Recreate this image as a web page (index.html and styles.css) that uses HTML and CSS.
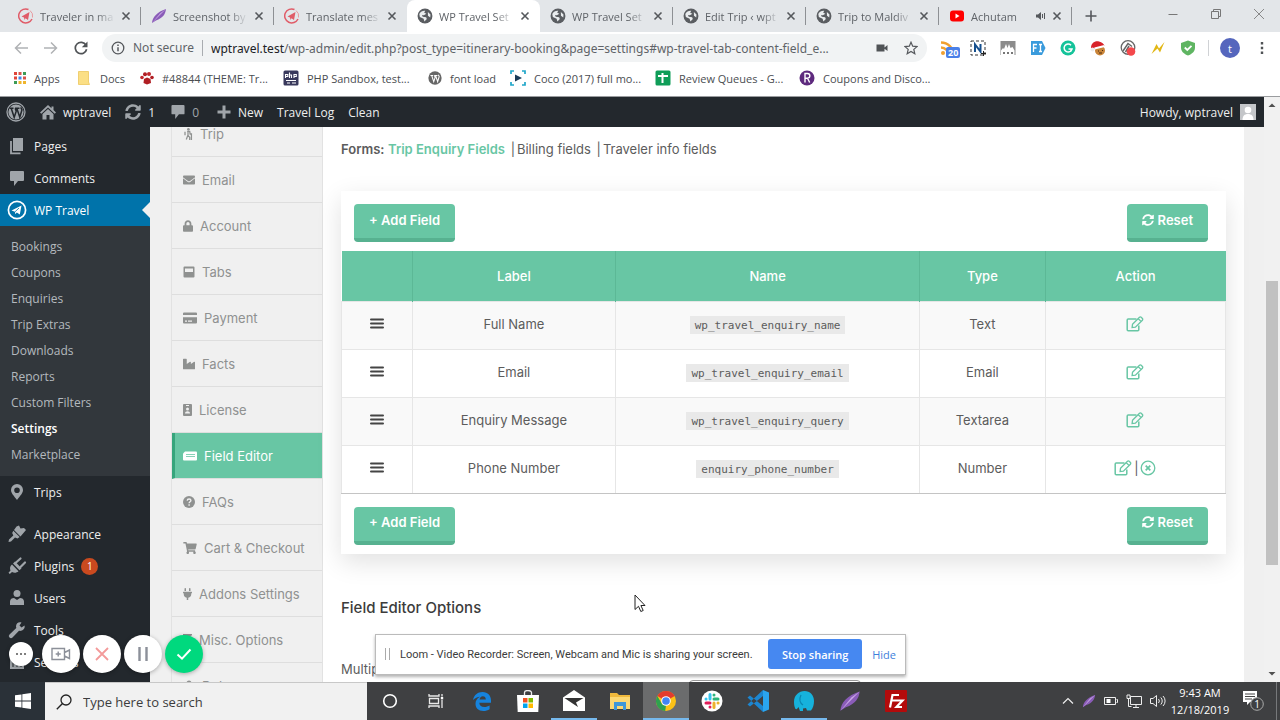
FILE: index.html
```html
<!DOCTYPE html>
<html lang="en">
<head>
  <meta charset="UTF-8" />
  <title>WP Travel Settings</title>
  <meta name="viewport" content="width=device-width, initial-scale=1" />
  <link rel="stylesheet" href="styles.css">
</head>
<body>

  <!-- Shared icons -->
  <svg class="sprite" aria-hidden="true">
    <symbol id="i-globe" viewBox="0 0 14 14"><circle cx="7" cy="7" r="6.5" fill="#5a5d61"/><path d="M2 5.2C3.200 3 5 2.200 7.200 2.400L6.300 4.200 8.200 5 6 6.300 4.400 6.100 5 7.600 8 8l.6 1.600L6.500 11.800 5.800 9.500 2.500 7.800zM9.500 3.500l2.300 2.200-.2 2.600-2-1.600z" fill="#e9ecee"/></symbol>
    <symbol id="i-plane" viewBox="0 0 16 16"><path d="M10.500 1.500A7 7 0 1 0 14 11" fill="none" stroke="#e05c68" stroke-width="1.500"/><path d="M12 2.500a7 7 0 0 1 2.500 7" fill="none" stroke="#e89aa0" stroke-width="1"/><path d="M3.500 8.500 11.500 4 10 12 7.500 10.200 6.500 12 6 9.500z" fill="#e05c68"/></symbol>
    <symbol id="i-feather" viewBox="0 0 16 16"><path d="M1 15C1.500 9 6 4 15 1 14.500 6 12 10 5 12.500z" fill="#8a5cb8"/><path d="M1 15 15 1 9 5.500z" fill="#c9a8e6"/></symbol>
    <symbol id="i-close" viewBox="0 0 10 10"><path d="M1.500 1.500l7 7M8.500 1.500l-7 7" stroke="#55585c" stroke-width="1.600"/></symbol>
    <symbol id="i-wp" viewBox="0 0 20 20"><circle cx="10" cy="10" r="9" fill="none" stroke="currentColor" stroke-width="1.300"/><circle cx="10" cy="10" r="7.600" fill="currentColor"/><path d="M3.500 6.300h4M9 6.300h4.500M5.200 6.300l3 9 2-6-1-3M10.800 6.300l3 9 2.200-7.500-1.300-2.500" fill="none" stroke="#23282d" stroke-width="1.500"/></symbol>
    <symbol id="i-bubble" viewBox="0 0 14 15"><path d="M1 0h12a1 1 0 0 1 1 1v8a1 1 0 0 1-1 1H8l-4 5v-5H1a1 1 0 0 1-1-1V1a1 1 0 0 1 1-1z" fill="currentColor"/></symbol>
    <symbol id="i-sync" viewBox="0 0 512 512"><path fill="currentColor" d="M370.720 133.280C339.458 104.008 298.888 87.962 255.848 88c-77.458.068-144.328 53.178-162.791 126.850-1.344 5.363-6.122 9.150-11.651 9.150H24.103c-7.498 0-13.194-6.807-11.807-14.176C33.933 94.924 134.813 8 256 8c66.448 0 126.791 26.136 171.315 68.685L463.030 40.970C478.149 25.851 504 36.559 504 57.941V192c0 13.255-10.745 24-24 24H345.941c-21.382 0-32.090-25.851-16.971-40.971l41.750-41.749zM32 296h134.059c21.382 0 32.090 25.851 16.971 40.971l-41.750 41.750c31.262 29.273 71.835 45.319 114.876 45.280 77.418-.070 144.315-53.144 162.787-126.849 1.344-5.363 6.122-9.150 11.651-9.150h57.304c7.498 0 13.194 6.807 11.807 14.176C478.067 417.076 377.187 504 256 504c-66.448 0-126.791-26.136-171.315-68.685L48.970 471.030C33.851 486.149 8 475.441 8 454.059V320c0-13.255 10.745-24 24-24z"/></symbol>
    <symbol id="i-edit" viewBox="0 0 18 16"><path d="M10.500 3H2.200a1 1 0 0 0-1 1v9.800a1 1 0 0 0 1 1h9.600a1 1 0 0 0 1-1V9.500" fill="none" stroke="currentColor" stroke-width="1.500"/><path d="M6.500 8.300 13.500 1.300a1.200 1.200 0 0 1 1.700 0l1.200 1.200a1.200 1.200 0 0 1 0 1.700l-7 7-3.300.4zM12.300 2.700l2.700 2.700" fill="none" stroke="currentColor" stroke-width="1.300"/></symbol>
    <symbol id="i-bars" viewBox="0 0 14 11"><path d="M1 1.500h12M1 5.500h12M1 9.500h12" stroke="currentColor" stroke-width="2" stroke-linecap="round"/></symbol>
  </svg>

  <!-- Browser tabs -->
  <header class="tab-strip">
    <div class="tab divided"><svg class="icon16"><use href="#i-plane"/></svg><span>Traveler in ma</span><button aria-label="Close tab"><svg class="icon10"><use href="#i-close"/></svg></button></div>
    <div class="tab divided"><svg class="icon16"><use href="#i-feather"/></svg><span>Screenshot by</span><button aria-label="Close tab"><svg class="icon10"><use href="#i-close"/></svg></button></div>
    <div class="tab"><svg class="icon16"><use href="#i-plane"/></svg><span>Translate mes</span><button aria-label="Close tab"><svg class="icon10"><use href="#i-close"/></svg></button></div>
    <div class="tab active"><svg class="icon16"><use href="#i-globe"/></svg><span>WP Travel Set</span><button aria-label="Close tab"><svg class="icon10"><use href="#i-close"/></svg></button></div>
    <div class="tab divided"><svg class="icon16"><use href="#i-globe"/></svg><span>WP Travel Set</span><button aria-label="Close tab"><svg class="icon10"><use href="#i-close"/></svg></button></div>
    <div class="tab divided"><svg class="icon16"><use href="#i-globe"/></svg><span>Edit Trip ‹ wpt</span><button aria-label="Close tab"><svg class="icon10"><use href="#i-close"/></svg></button></div>
    <div class="tab divided"><svg class="icon16"><use href="#i-globe"/></svg><span>Trip to Maldiv</span><button aria-label="Close tab"><svg class="icon10"><use href="#i-close"/></svg></button></div>
    <div class="tab divided">
      <svg class="icon16" viewBox="0 0 16 16"><rect x="1" y="2.500" width="14" height="11" rx="3" fill="#f00"/><path d="M6.500 5.500v5l4-2.500z" fill="#fff"/></svg>
      <span>Achutam</span>
      <svg class="icon10" viewBox="0 0 10 10"><path d="M0 3.500h2L5 1v8L2 6.500H0z" fill="#55585c"/><path d="M6.500 3v4M8.500 2v6" stroke="#55585c"/></svg>
      <button aria-label="Close tab"><svg class="icon10"><use href="#i-close"/></svg></button>
    </div>
    <button class="new-tab" aria-label="New tab"><svg class="icon12" viewBox="0 0 12 12"><path d="M6 .5v11M.5 6h11" stroke="#55585c" stroke-width="1.600"/></svg></button>
    <div class="window-controls">
      <button aria-label="Minimize"><svg class="icon12" viewBox="0 0 12 12"><path d="M1.500 6.500h9" stroke="#777"/></svg></button>
      <button aria-label="Restore"><svg class="icon12" viewBox="0 0 12 12"><path d="M1.500 3.500h7v7h-7zM3.500 3.500v-2h7v7h-2" fill="none" stroke="#777"/></svg></button>
      <button aria-label="Close"><svg class="icon12" viewBox="0 0 12 12"><path d="M1 1l10 10M11 1 1 11" stroke="#888"/></svg></button>
    </div>
  </header>

  <!-- Address bar -->
  <div class="toolbar">
    <button class="nav-btn" aria-label="Back"><svg class="icon14" viewBox="0 0 14 14"><path d="M14 7H1.500M7 1.500 1.500 7 7 12.500" fill="none" stroke="#b0b2b5" stroke-width="1.500"/></svg></button>
    <button class="nav-btn" aria-label="Forward"><svg class="icon14" viewBox="0 0 14 14"><path d="M0 7h12.500M7 1.500 12.500 7 7 12.500" fill="none" stroke="#b0b2b5" stroke-width="1.500"/></svg></button>
    <button class="nav-btn" aria-label="Reload"><svg class="icon14" viewBox="0 0 14 14"><path d="M12 4.200A5.700 5.700 0 1 0 12.600 8.200" fill="none" stroke="#505356" stroke-width="1.700"/><path d="M13.500.5v5.700H7.800z" fill="#505356"/></svg></button>
    <div class="omnibox">
      <svg class="icon14" viewBox="0 0 14 14"><circle cx="7" cy="7" r="5.800" fill="none" stroke="#55585c" stroke-width="1.300"/><path d="M7 6.200v4M7 3.600v1.500" stroke="#55585c" stroke-width="1.500"/></svg>
      <span class="not-secure">Not secure</span>
      <span class="url"><b>wptravel.test</b>/wp-admin/edit.php?post_type=itinerary-booking&amp;page=settings#wp-travel-tab-content-field_e...</span>
      <svg class="icon12" viewBox="0 0 12 12"><path d="M.5 2.500h8v3L11.500 3v6L8.500 6.700v2.800h-8z" fill="#505356"/></svg>
      <button aria-label="Bookmark"><svg class="icon14" viewBox="0 0 14 14"><path d="M7 1.200 8.700 5.200 13 5.600 9.800 8.400 10.800 12.700 7 10.400 3.200 12.700 4.200 8.400 1 5.600 5.300 5.200z" fill="none" stroke="#55585c" stroke-width="1.200"/></svg></button>
    </div>
    <div class="extensions">
      <div class="ext"><svg class="icon16" viewBox="0 0 16 16"><circle cx="3" cy="13" r="2" fill="#f0a030"/><path d="M1 7.500A7.500 7.500 0 0 1 8.500 15M1 2.500A12.500 12.500 0 0 1 13.500 15" fill="none" stroke="#f0a030" stroke-width="2.500"/></svg><span class="ext-badge">20</span></div>
      <svg class="icon16" viewBox="0 0 16 16"><rect x="1" y="1" width="14" height="14" fill="none" stroke="#333" stroke-dasharray="3 2"/><path d="M5 12V4.500l5.500 7V4" fill="none" stroke="#16508e" stroke-width="2"/><path d="M13.500 11v5M11 13.500h5" stroke="#222"/></svg>
      <svg class="icon16" viewBox="0 0 16 16"><rect x=".5" y="1" width="15" height="14" fill="#8c8c8c"/><path d="M1 10.500 3 8l1 1 2-5 1.500 4L9 4l1.500 4 2-1 2 3.500V15H1z" fill="#fff"/><path d="M3 13h2M7 13h2M11 13h2" stroke="#777" stroke-width="2"/></svg>
      <svg class="icon16" viewBox="0 0 16 16"><path d="M1 1h11l3.500 7L12 15H1z" fill="#3a9bdc"/><path d="M3.500 12V4.500H7M3.500 8h3M9 4.500h3M10.500 4.500v7M9 11.500h3" fill="none" stroke="#fff" stroke-width="1.300"/></svg>
      <svg class="icon16" viewBox="0 0 16 16"><circle cx="8" cy="8" r="7.500" fill="#15c39a"/><path d="M11 5.200A4 4 0 1 0 12 9H8.500M12 9l-1.500 2.500" fill="none" stroke="#fff" stroke-width="1.500"/></svg>
      <svg class="icon16" viewBox="0 0 16 16"><circle cx="10" cy="10.500" r="5" fill="#c98438"/><path d="M1 8C1 3 5 .5 9 1.500 12 2 14 4 14.500 6L5 8.500z" fill="#d8232a"/><path d="M4.500 8.500 14.500 6" stroke="#fff" stroke-width="2"/><circle cx="2.500" cy="9.500" r="2" fill="#eee"/><path d="M8 11h1M12 10.500h1M9 13h3" stroke="#4a2c10"/></svg>
      <svg class="icon16" viewBox="0 0 16 16"><circle cx="8" cy="7.500" r="6.800" fill="none" stroke="#666" stroke-width="1.300"/><path d="M3 11 8 3.500l4 3M5.500 12 9 6" fill="none" stroke="#666" stroke-width="1.500"/><circle cx="11" cy="11.500" r="4.300" fill="#f4484c"/></svg>
      <svg class="icon16" viewBox="0 0 16 16"><path d="M1.500 14 6.500 4l2.500 4.500L14.500 2 10 12.500 7.500 8.500z" fill="#e2b714"/></svg>
      <svg class="icon16" viewBox="0 0 16 16"><path d="M8 .5 15 3v4.500c0 4-3 6.500-7 8-4-1.500-7-4-7-8V3z" fill="#5fb562"/><path d="M4.800 7.500 7.300 10l4.200-4.200" fill="none" stroke="#fff" stroke-width="1.800"/></svg>
    </div>
    <button class="profile">t</button>
    <button class="menu-btn" aria-label="Menu"><svg class="icon14" viewBox="0 0 14 14"><path d="M5.800 1h2.400v2.400H5.800zM5.800 5.800h2.400v2.400H5.800zM5.800 10.600h2.400V13H5.800z" fill="#505356"/></svg></button>
  </div>

  <!-- Bookmarks -->
  <nav class="bookmarks">
    <a href="#"><svg class="icon12" viewBox="0 0 12 12"><path d="M0 0h3v3H0zM0 4.500h3v3H0z" fill="#e0453a"/><path d="M4.500 0h3v3h-3zM9 4.500h3v3H9z" fill="#d9534a"/><path d="M4.500 4.500h3v3h-3z" fill="#3f86e8"/><path d="M9 0h3v3H9zM0 9h3v3H0z" fill="#3d9b55"/><path d="M4.500 9h3v3h-3zM9 9h3v3H9z" fill="#efb52c"/></svg>Apps</a>
    <a href="#"><svg class="icon14" viewBox="0 0 14 14"><path d="M.5.5h10v10.500l1 2.500H.5z" fill="#fbdf85" stroke="#ecc75c" stroke-width=".8"/></svg>Docs</a>
    <a href="#"><svg class="icon14" viewBox="0 0 14 14"><path d="M4 8 7 6.500 10.500 8 11 12 7 13.500 3.500 12z" fill="#b01e23"/><circle cx="2" cy="6.500" r="1.800" fill="#c1272d"/><circle cx="5" cy="3.300" r="2" fill="#b01e23"/><circle cx="9" cy="3" r="2" fill="#c1272d"/><circle cx="12" cy="6.500" r="1.800" fill="#b01e23"/></svg>#48844 (THEME: Tr...</a>
    <a href="#"><svg class="icon16" viewBox="0 0 16 16"><rect width="15" height="15" x=".5" y=".5" rx="1.500" fill="#39395c"/><path d="M2.500 8V4.500h2.300v2H2.500M6.500 2.500V8M6.500 5h2v3M11 8V4.500h2.300v2H11M3 10.500h10M4 13h3M9 13h4" fill="none" stroke="#fff" stroke-width="1.100"/></svg>PHP Sandbox, test...</a>
    <a href="#"><svg class="icon14" viewBox="0 0 20 20"><circle cx="10" cy="10" r="9.500" fill="#666"/><path d="M3.500 6.300h4M9 6.300h4.500M5.200 6.300l3 9 2-6-1-3M10.800 6.300l3 9 2.200-7.500-1.300-2.500" fill="none" stroke="#fff" stroke-width="1.500"/></svg>font load</a>
    <a href="#"><svg class="icon16" viewBox="0 0 16 16"><path d="M1 4V1h3M12 1h3v3M15 12v3h-3M4 15H1v-3" fill="none" stroke="#1fa6c9" stroke-width="1.700"/><path d="M5 4.500v7L12 8z" fill="#1b3a57"/></svg>Coco (2017) full mo...</a>
    <a href="#"><svg class="icon16" viewBox="0 0 16 16"><rect x=".5" y=".5" width="15" height="15" rx="1.500" fill="#0f9d58"/><path d="M3 6h10M7.500 3v10" stroke="#fff" stroke-width="2"/></svg>Review Queues - G...</a>
    <a href="#"><svg class="icon16" viewBox="0 0 16 16"><circle cx="8" cy="8" r="7.500" fill="#5e2a7e"/><path d="M6 12.500v-9h2.500a2.300 2.300 0 0 1 0 4.700H6M8.500 8.200l2.200 4.300" fill="none" stroke="#fff" stroke-width="1.400"/></svg>Coupons and Disco...</a>
  </nav>

  <div class="viewport">
    <div class="site">
      <!-- Admin bar -->
      <div class="admin-bar">
        <a href="#" aria-label="WordPress"><svg class="icon20"><use href="#i-wp"/></svg></a>
        <a href="#"><svg class="icon16" viewBox="0 0 16 16"><path d="M8 1 0 8.500 1.300 9.800 8 3.600l6.700 6.200L16 8.500 13.500 6V2.500h-2V4.200z" fill="currentColor"/><path d="M2.500 10 8 5l5.500 5v5.500h-4V11h-3v4.500h-4z" fill="currentColor"/></svg>wptravel</a>
        <a href="#"><svg class="icon16"><use href="#i-sync"/></svg>1</a>
        <a href="#" class="bar-comments"><svg class="icon14"><use href="#i-bubble"/></svg><span class="dim">0</span></a>
        <a href="#" class="bar-new"><svg class="icon14" viewBox="0 0 14 14"><path d="M7 .5v13M.5 7h13" stroke="currentColor" stroke-width="3"/></svg>New</a>
        <a href="#">Travel Log</a>
        <a href="#">Clean</a>
        <a href="#" class="bar-user">Howdy, wptravel <svg class="icon16" viewBox="0 0 16 16"><rect width="16" height="16" fill="#c4c6c9"/><circle cx="8" cy="6" r="3.300" fill="#fff"/><path d="M2.500 16c0-4 2-6 5.500-6s5.500 2 5.500 6z" fill="#fff"/></svg></a>
      </div>

      <div class="admin-body">
        <!-- Admin menu -->
        <nav class="admin-menu">
          <a href="#"><svg class="icon20" viewBox="0 0 20 20"><path d="M6 2h10v13H6z" fill="currentColor"/><path d="M4 5v12.300h9.500" fill="none" stroke="currentColor" stroke-width="1.800"/></svg>Pages</a>
          <a href="#"><svg class="icon20" viewBox="-3 -3 20 20"><path d="M1 0h12a1 1 0 0 1 1 1v8a1 1 0 0 1-1 1H8l-4 5v-5H1a1 1 0 0 1-1-1V1a1 1 0 0 1 1-1z" fill="currentColor"/></svg>Comments</a>
          <a href="#" class="current"><svg class="icon20" viewBox="0 0 20 20"><circle cx="10" cy="10" r="8.600" fill="none" stroke="currentColor" stroke-width="1.700"/><path d="M4.500 10.500 14.500 5.500 12.800 14.500 9.800 12.600 8.300 14.300 8 11.800z" fill="currentColor"/><path d="M8 11.800l4-3.800" stroke="#0073aa" stroke-width=".8"/></svg>WP Travel</a>
          <div class="submenu">
            <a href="#">Bookings</a>
            <a href="#">Coupons</a>
            <a href="#">Enquiries</a>
            <a href="#">Trip Extras</a>
            <a href="#">Downloads</a>
            <a href="#">Reports</a>
            <a href="#">Custom Filters</a>
            <a href="#" class="selected">Settings</a>
            <a href="#">Marketplace</a>
          </div>
          <a href="#" class="group-end"><svg class="icon20" viewBox="0 0 20 20"><path d="M10 18C7 14 4 11 4 8a6 6 0 0 1 12 0c0 3-3 6-6 10zM10 5.500a2.800 2.800 0 1 0 0 5.600 2.800 2.800 0 0 0 0-5.600z" fill="currentColor" fill-rule="evenodd"/></svg>Trips</a>
          <a href="#"><svg class="icon20" viewBox="0 0 20 20"><path d="M9.500 2.500 12 1.500l1.500 3L17 4l2 2-5.500 6.500L7 6z" fill="currentColor"/><path d="M6.300 6.800 12.700 13 10.500 14.500 8 13.500 4 17.500 1.500 18 2 15.500 6.300 11.500 5.200 9z" fill="currentColor"/></svg>Appearance</a>
          <a href="#"><svg class="icon20" viewBox="0 0 20 20"><path d="M5 8.500 11.500 15.200C9.500 17 7 17 5 16l-2.200 2-1.300-1.200L3.500 14.500C2.500 12.500 3 10 5 8.500z" fill="currentColor"/><path d="M6 7.500 8 5.500l6.500 6.700-2 2z" fill="currentColor"/><path d="M9 6.500l4.500-4M13.500 11l4.500-4.500" stroke="currentColor" stroke-width="2.200" stroke-linecap="round"/></svg>Plugins <span class="count">1</span></a>
          <a href="#"><svg class="icon20" viewBox="0 0 20 20"><circle cx="10" cy="5.500" r="3.500" fill="currentColor"/><path d="M3 17v-3.500C3 11 5 10 7 10l3 2 3-2c2 0 4 1 4 3.500V17z" fill="currentColor"/></svg>Users</a>
          <a href="#"><svg class="icon20" viewBox="0 0 20 20"><path d="M17.500 5.500 14.500 7.500 12.500 5.500 14.500 2.500C12 1.500 9 3 9 6.500L9.300 8 2.500 14.500a2 2 0 0 0 3 3L12 10.800C15 11.500 18.500 9 17.500 5.500z" fill="currentColor"/></svg>Tools</a>
          <a href="#"><svg class="icon20" viewBox="0 0 20 20"><path d="M3 3h14v14H3z" fill="currentColor"/><path d="M6 5v10M10 5v10M14 5v10" stroke="#23282d"/></svg>Settings</a>
        </nav>

        <!-- Settings tabs -->
        <nav class="settings-tabs">
          <a href="#"><svg class="w10" viewBox="0 0 10 14"><circle cx="5.500" cy="1.600" r="1.500" fill="currentColor"/><path d="M4 4h3l.5 3h2M5 4v4.500L7 11v3M5 8 3 13.500M1.500 4.500v4M9 6v8" fill="none" stroke="currentColor" stroke-width="1.500"/></svg>Trip</a>
          <a href="#"><svg class="w12" viewBox="0 0 512 512"><path fill="currentColor" d="M502.300 190.800c3.900-3.100 9.700-.2 9.700 4.700V400c0 26.500-21.500 48-48 48H48c-26.500 0-48-21.500-48-48V195.600c0-5 5.700-7.800 9.700-4.700 22.400 17.400 52.100 39.500 154.100 113.600 21.100 15.400 56.700 47.800 92.200 47.600 35.700.3 72-32.800 92.300-47.600 102-74.100 131.600-96.300 154-113.700zM256 320c23.200.4 56.600-29.200 73.400-41.400 132.700-96.300 142.800-104.700 173.400-128.700 5.800-4.500 9.200-11.500 9.200-18.900v-19c0-26.500-21.500-48-48-48H48c-26.500 0-48 21.500-48 48v19c0 7.400 3.400 14.300 9.200 18.900 30.600 23.900 40.700 32.400 173.400 128.700 16.800 12.200 50.200 41.800 73.400 41.400z"/></svg>Email</a>
          <a href="#"><svg class="w10" viewBox="0 0 448 512"><path fill="currentColor" d="M400 224h-24v-72C376 68.200 307.800 0 224 0S72 68.200 72 152v72H48c-26.500 0-48 21.500-48 48v192c0 26.500 21.500 48 48 48h352c26.500 0 48-21.500 48-48V272c0-26.500-21.500-48-48-48zm-104 0H152v-72c0-39.700 32.300-72 72-72s72 32.300 72 72v72z"/></svg>Account</a>
          <a href="#"><svg class="w12" viewBox="0 0 12 12"><path d="M1.500.5h9a1 1 0 0 1 1 1v9a1 1 0 0 1-1 1h-9a1 1 0 0 1-1-1v-9a1 1 0 0 1 1-1zM2 2.500v3.500h8V2.500z" fill="currentColor" fill-rule="evenodd"/></svg>Tabs</a>
          <a href="#"><svg class="w14" viewBox="0 0 14 12"><path d="M1 .5h12a1 1 0 0 1 1 1V3H0V1.500a1 1 0 0 1 1-1zM0 5.200h14v5.300a1 1 0 0 1-1 1H1a1 1 0 0 1-1-1zM2 8.500v1.200h2V8.500zM5 8.500v1.200h4V8.500z" fill="currentColor" fill-rule="evenodd"/></svg>Payment</a>
          <a href="#"><svg class="w12" viewBox="0 0 512 512"><path fill="currentColor" d="M475.115 163.781L336 252.309v-68.280c0-18.916-20.931-30.399-36.885-20.248L160 252.309V56c0-13.255-10.745-24-24-24H24C10.745 32 0 42.745 0 56v400c0 13.255 10.745 24 24 24h464c13.255 0 24-10.745 24-24V184.029c0-18.917-20.931-30.399-36.885-20.248z"/></svg>Facts</a>
          <a href="#"><svg class="w9" viewBox="0 0 9 12"><rect width="9" height="12" rx="1" fill="currentColor"/><path d="M3 1.500h3" stroke="#f0f0f0"/><circle cx="4.500" cy="5" r="1.500" fill="#f0f0f0"/><path d="M2 9.500c0-3 5-3 5 0z" fill="#f0f0f0"/></svg>License</a>
          <a href="#" class="active"><svg class="w14" viewBox="0 0 14 12"><path d="M2 1.500h11a1 1 0 0 1 1 1v7a1 1 0 0 1-1 1H1a1 1 0 0 1-1-1v-6z" fill="currentColor"/><path d="M3 4.500h9M3 6.500h9" stroke="#68c6a4" stroke-width=".8"/></svg>Field Editor</a>
          <a href="#"><svg class="w12" viewBox="0 0 12 12"><circle cx="6" cy="6" r="6" fill="currentColor"/><path d="M4.200 4.600C4.400 2.500 7.900 2.600 7.900 4.500 7.900 5.800 6.100 5.700 6.100 7.200M6.100 8.200v1.500" fill="none" stroke="#f0f0f0" stroke-width="1.400"/></svg>FAQs</a>
          <a href="#"><svg class="w14" viewBox="0 0 576 512"><path fill="currentColor" d="M528.120 301.319l47.273-208C578.806 78.301 567.391 64 551.990 64H159.208l-9.166-44.810C147.758 8.021 137.930 0 126.529 0H24C10.745 0 0 10.745 0 24v16c0 13.255 10.745 24 24 24h69.883l70.248 343.435C147.325 417.100 136 435.222 136 456c0 30.928 25.072 56 56 56s56-25.072 56-56c0-15.674-6.447-29.835-16.824-40h209.647C430.447 426.165 424 440.326 424 456c0 30.928 25.072 56 56 56s56-25.072 56-56c0-22.172-12.888-41.332-31.579-50.405l5.517-24.276c3.413-15.018-8.002-29.319-23.403-29.319H218.117l-6.545-32h293.145c11.206 0 20.920-7.754 23.403-18.681z"/></svg>Cart &amp; Checkout</a>
          <a href="#"><svg class="w9" viewBox="0 0 384 512"><path fill="currentColor" d="M320 32a32 32 0 0 0-64 0v96h64zm48 128H16a16 16 0 0 0-16 16v32a16 16 0 0 0 16 16h16v32a160.070 160.070 0 0 0 128 156.800V512h64v-99.200A160.070 160.070 0 0 0 352 256v-32h16a16 16 0 0 0 16-16v-32a16 16 0 0 0-16-16zM128 32a32 32 0 0 0-64 0v96h64z"/></svg>Addons Settings</a>
          <a href="#"><svg class="w9" viewBox="0 0 9 12"><path d="M0 0h9v1.500H8L5.500 6 8 10.500h1V12H0v-1.500h1L3.500 6 1 1.500H0z" fill="currentColor"/></svg>Misc. Options</a>
          <a href="#"><svg class="w12" viewBox="0 0 12 12"><path d="M3.500 3a2.500 2.500 0 0 1 5 0zM3 4h6v4a3 3 0 0 1-6 0z" fill="currentColor"/><path d="M0 7h12M1 3l2 2M11 3 9 5M1 11l2-2M11 11 9 9" stroke="currentColor"/></svg>Debug</a>
        </nav>

        <!-- Field editor -->
        <main class="content">
          <div class="forms">
            <strong>Forms:</strong>
            <a href="#" class="active">Trip Enquiry Fields</a>
            <span class="bar">|</span><a href="#">Billing fields</a>
            <span class="bar">|</span><a href="#">Traveler info fields</a>
          </div>

          <section class="card">
            <div class="card-actions">
              <button class="btn">+ Add Field</button>
              <button class="btn"><svg class="icon12"><use href="#i-sync"/></svg> Reset</button>
            </div>
            <table>
              <thead>
                <tr><th class="col-drag"></th><th class="col-label">Label</th><th class="col-name">Name</th><th class="col-type">Type</th><th>Action</th></tr>
              </thead>
              <tbody>
                <tr>
                  <td><svg class="bars"><use href="#i-bars"/></svg></td><td>Full Name</td><td><code>wp_travel_enquiry_name</code></td><td>Text</td>
                  <td><div class="row-actions"><a href="#" aria-label="Edit"><svg class="edit"><use href="#i-edit"/></svg></a></div></td>
                </tr>
                <tr>
                  <td><svg class="bars"><use href="#i-bars"/></svg></td><td>Email</td><td><code>wp_travel_enquiry_email</code></td><td>Email</td>
                  <td><div class="row-actions"><a href="#" aria-label="Edit"><svg class="edit"><use href="#i-edit"/></svg></a></div></td>
                </tr>
                <tr>
                  <td><svg class="bars"><use href="#i-bars"/></svg></td><td>Enquiry Message</td><td><code>wp_travel_enquiry_query</code></td><td>Textarea</td>
                  <td><div class="row-actions"><a href="#" aria-label="Edit"><svg class="edit"><use href="#i-edit"/></svg></a></div></td>
                </tr>
                <tr>
                  <td><svg class="bars"><use href="#i-bars"/></svg></td><td>Phone Number</td><td><code>enquiry_phone_number</code></td><td>Number</td>
                  <td><div class="row-actions"><a href="#" aria-label="Edit"><svg class="edit"><use href="#i-edit"/></svg></a>|<a href="#" aria-label="Remove"><svg class="icon16" viewBox="0 0 16 16"><circle cx="8" cy="8" r="6.800" fill="none" stroke="currentColor" stroke-width="1.300"/><path d="M5.700 5.700l4.600 4.600M10.300 5.700l-4.600 4.600" stroke="currentColor" stroke-width="1.700"/></svg></a></div></td>
                </tr>
              </tbody>
            </table>
            <div class="card-actions bottom">
              <button class="btn">+ Add Field</button>
              <button class="btn"><svg class="icon12"><use href="#i-sync"/></svg> Reset</button>
            </div>
          </section>

          <h3>Field Editor Options</h3>
          <div class="option-row">
            <label for="multiple">Multiple Travelers</label>
            <input type="text" id="multiple" />
          </div>
        </main>
      </div>
    </div>

    <div class="scrollbar">
      <svg class="icon16" viewBox="0 0 16 16"><path d="M4.500 10h7L8 6.500z" fill="#505050"/></svg>
      <div class="scroll-track"><div class="scroll-thumb"></div></div>
      <svg class="icon16" viewBox="0 0 16 16"><path d="M4.500 6h7L8 9.500z" fill="#505050"/></svg>
    </div>
  </div>

  <!-- Taskbar -->
  <footer class="taskbar">
    <button class="start" aria-label="Start"><svg class="icon16" viewBox="0 0 16 16"><path d="M0 2.300 6.500 1.400v6.200H0zM7.300 1.300 16 0v7.600H7.300zM0 8.400h6.500v6.200L0 13.700zM7.300 8.400H16V16l-8.700-1.300z" fill="#fff"/></svg></button>
    <div class="search">
      <svg class="icon16" viewBox="0 0 16 16"><circle cx="10" cy="6" r="5" fill="none" stroke="#222" stroke-width="1.300"/><path d="M6.500 9.500.8 15.200" stroke="#222" stroke-width="1.400"/></svg>
      <input type="text" aria-label="Search" placeholder="Type here to search" />
    </div>
    <div class="apps">
      <button aria-label="Cortana"><svg class="icon16" viewBox="0 0 16 16"><circle cx="8" cy="8" r="6.300" fill="none" stroke="#fff" stroke-width="1.600"/></svg></button>
      <button aria-label="Task view"><svg class="icon16" viewBox="0 0 16 16"><path d="M1.500 5.500h9v5h-9zM1 1v2h10V1M1 15v-2h10v2M14 1v2.500M14 7v8" fill="none" stroke="#e8e8e8" stroke-width="1.300"/><path d="M12.800 4h2.400v2.400h-2.400z" fill="#fff"/></svg></button>
      <button aria-label="Edge"><svg class="icon20" viewBox="0 0 20 20"><path d="M1 9C2 4 5.500 1 10.500 1 16 1 19 5 19 9.500v2.300H7.300c.2 3 2.200 4.200 5 4.200 2 0 3.800-.6 5.300-1.500v3.700C15.800 19.300 13.800 20 11.300 20 6.500 20 3.500 17 3.500 12.800 3.500 9.800 5 7.200 8 5.800 5.500 6 3 7.300 1 9zM7.500 8.500h6.300C13.700 6.500 12.700 5.300 10.800 5.300 9 5.300 7.800 6.700 7.500 8.500z" fill="#1683dd"/></svg></button>
      <button aria-label="Store"><svg class="icon22" viewBox="0 0 22 22"><path d="M7.500 5.500V2.500a3.500 2 0 0 1 7 0v3" fill="none" stroke="#eee" stroke-width="1.300"/><path d="M0 5h22l-.7 17H.7z" fill="#fff"/><path d="M6 8h4.500v4.500H6z" fill="#f25022"/><path d="M11.500 8H16v4.500h-4.500z" fill="#7fba00"/><path d="M6 13.500h4.500V18H6z" fill="#00a4ef"/><path d="M11.500 13.500H16V18h-4.500z" fill="#ffb900"/></svg></button>
      <button aria-label="Mail" class="running"><svg class="icon22" viewBox="0 0 22 22"><path d="M0 7.500 11 0l11 7.500V21H0z" fill="#fff"/><path d="M1.500 8h19L13 12.500l2 4.500-5-3.300z" fill="#333"/></svg></button>
      <button aria-label="File Explorer"><svg class="icon20" viewBox="0 0 20 20"><path d="M0 2h7l2 2h11v14H0z" fill="#f0b93c"/><path d="M0 6h20v12H0z" fill="#fcd873"/><path d="M4 11h12v8h-3v-4H7v4H4z" fill="#3f97d8"/></svg></button>
      <button aria-label="Chrome" class="running focused"><svg class="icon22" viewBox="0 0 22 22"><circle cx="11" cy="11" r="10" fill="#fbc116"/><path d="M11 11 2.300 6A10 10 0 0 1 19.700 6z" fill="#e23b2e"/><path d="M2.300 6 7 14l4 1.500L10.200 21A10 10 0 0 1 2.300 6z" fill="#2fa14f"/><circle cx="11" cy="11" r="4.800" fill="#fff"/><circle cx="11" cy="11" r="3.800" fill="#4285f4"/></svg></button>
      <button aria-label="Slack"><svg class="icon22" viewBox="0 0 22 22"><circle cx="11" cy="11" r="10.500" fill="#fff"/><g fill="none" stroke-width="3" stroke-linecap="round"><path d="M9 4.500V9M5 9h.1" stroke="#36c5f0"/><path d="M17 9h-4M13 5v.1" stroke="#2eb67d"/><path d="M13 17.500V13M17 13h.1" stroke="#ecb22e"/><path d="M5 13h4M9 17v.1" stroke="#e01e5a"/></g></svg></button>
      <button aria-label="VS Code"><svg class="icon22" viewBox="0 0 22 22"><path d="M16 0l6 2.500v17L16 22z" fill="#2aa5f0"/><path d="M16 6 3 16.500.5 14.500 16 0zM16 16 3 5.500.5 7.500 16 22z" fill="#1c86d1"/></svg></button>
      <button aria-label="Sequel client" class="running"><svg class="icon22" viewBox="0 0 22 22"><path d="M1 12C1 5 6 1 11.500 1S21 5 21 11c0 4-1 7-3 9.500h-4l-1-2.500-3 .5v2.500H7l-1.500-4c-1 1.500-1.500 2.500-3 2C1.500 17 1 15 1 12z" fill="#16b2dc"/><path d="M8 5c-2 4-1 8 2 10" fill="none" stroke="#0b86b0" stroke-width="1.300"/></svg></button>
      <button aria-label="Lightshot"><svg class="icon22"><use href="#i-feather"/></svg></button>
      <button aria-label="FileZilla"><svg class="icon22" viewBox="0 0 22 22"><rect width="22" height="22" rx="1" fill="#b30b0b"/><path d="M5 17.500 7.500 5H14M6.300 10.500h5M11 10.500h6.500l-6 6.500H17" fill="none" stroke="#fff" stroke-width="2.200"/></svg></button>
    </div>
    <div class="tray">
      <svg class="icon12" viewBox="0 0 12 12"><path d="M1 8.500 6 3.500l5 5" fill="none" stroke="#eee" stroke-width="1.200"/></svg>
      <svg class="icon14"><use href="#i-feather"/></svg>
      <svg class="icon14" viewBox="0 0 14 14"><path d="M.5 3.500h11v7H.5zM12.500 5.500h1v3h-1" fill="none" stroke="#eee"/><path d="M2.500 5h4v4h-4z" fill="#fff"/></svg>
      <svg class="icon16" viewBox="0 0 16 16"><path d="M4.500 3.500h11v8h-11zM7 14.500h6M10 11.500v3M1 2h3v3.500H1zM2.500 5.500v8h3" fill="none" stroke="#eee"/></svg>
      <svg class="icon16" viewBox="0 0 16 16"><path d="M.5 5.500H3L6.500 2.500v11L3 10.500H.5zM8.500 6a3 3 0 0 1 0 4M10.800 4.500a5 5 0 0 1 0 7M13 3a7 7 0 0 1 0 10" fill="none" stroke="#eee"/></svg>
    </div>
    <div class="clock"><span>9:43 AM</span><span>12/18/2019</span></div>
    <button class="notice" aria-label="Notifications"><svg class="icon22" viewBox="0 0 22 22"><path d="M1 1h14v11H8l-3 3v-3H1z" fill="#fff"/><path d="M3 4h10M3 6.500h10M3 9h7" stroke="#444"/><circle cx="15" cy="14" r="6.300" fill="#3f4042" stroke="#aaa"/><text x="15" y="18" text-anchor="middle" font-size="10" fill="#fff">1</text></svg></button>
  </footer>

  <!-- Recorder controls -->
  <div class="recorder">
    <button class="small" aria-label="More"><svg class="icon12" viewBox="0 0 12 12"><path d="M1 6h2M5 6h2M9 6h2" stroke="#555" stroke-width="1.500"/></svg></button>
    <button aria-label="Camera"><svg class="icon20" viewBox="0 0 20 20"><path d="M1 4.500h12.500v11H1zM13.500 8.500l5-2.500v8.500l-5-2.500M7.200 7.500v5M4.700 10h5" fill="none" stroke="#8c9099" stroke-width="1.400"/></svg></button>
    <button aria-label="Cancel"><svg class="icon16" viewBox="0 0 16 16"><path d="M2 2l12 12M14 2 2 14" stroke="#f39a9a" stroke-width="1.800"/></svg></button>
    <button aria-label="Pause"><svg class="icon16" viewBox="0 0 16 16"><path d="M4.500 1v14M11.500 1v14" stroke="#8c9099" stroke-width="2.400"/></svg></button>
    <button class="done" aria-label="Finish"><svg class="icon16" viewBox="0 0 16 16"><path d="M1.500 8.500 6 12.700 14.500 3.500" fill="none" stroke="#fff" stroke-width="2"/></svg></button>
  </div>

  <!-- Screen sharing notice -->
  <div class="sharing">
    <span class="grip"></span>
    <p>Loom - Video Recorder: Screen, Webcam and Mic is sharing your screen.</p>
    <button>Stop sharing</button>
    <a href="#">Hide</a>
  </div>

  <svg class="cursor" viewBox="0 0 12 19"><path d="M1 1v14.500l3.500-3.200 2.300 5.200 2.400-1-2.300-5H11z" fill="#fff" stroke="#222"/></svg>

</body>
</html>
```
FILE: styles.css
```css
* {
  margin: 0;
  padding: 0;
  box-sizing: border-box;
}

body {
  height: 100vh;
  display: flex;
  flex-direction: column;
  position: relative;
  overflow: hidden;
  background: #fff;
  font-family: "Open Sans", sans-serif;
  font-size: 12px;
  color: #5f6368;
}

a {
  color: inherit;
  text-decoration: none;
}

button {
  background: none;
  border: none;
  font-family: inherit;
  cursor: pointer;
  display: flex;
  align-items: center;
  justify-content: center;
}

svg {
  flex-shrink: 0;
}

.sprite {
  position: absolute;
  width: 0;
  height: 0;
}

.icon10 { width: 10px; height: 10px; }
.icon12 { width: 12px; height: 12px; }
.icon14 { width: 14px; height: 14px; }
.icon16 { width: 16px; height: 16px; }
.icon20 { width: 20px; height: 20px; }
.icon22 { width: 22px; height: 22px; }

/* Browser tabs */
.tab-strip {
  display: flex;
  height: 32px;
  padding-left: 8px;
  background: #e3e6e9;
  font-size: 11px;
}

.tab {
  display: flex;
  align-items: center;
  gap: 6px;
  flex: 0 1 133px;
  min-width: 0;
  padding: 0 10px;
  position: relative;
}

.tab span {
  flex: 1;
  white-space: nowrap;
  -webkit-mask-image: linear-gradient(to right, #000 75%, transparent);
  mask-image: linear-gradient(to right, #000 75%, transparent);
}

.tab.active {
  background: #fff;
  border-radius: 8px 8px 0 0;
}

.tab.divided::after {
  content: "";
  position: absolute;
  right: 0;
  top: 7px;
  width: 1px;
  height: 18px;
  background: #8d9094;
}

.new-tab {
  width: 38px;
}

.window-controls {
  display: flex;
  margin-left: auto;
}

.window-controls button {
  width: 43px;
  height: 28px;
}

/* Address bar */
.toolbar {
  display: flex;
  align-items: center;
  height: 32px;
  padding: 0 8px 0 6px;
}

.nav-btn {
  width: 30px;
  height: 28px;
}

.omnibox {
  display: flex;
  align-items: center;
  flex: 1;
  min-width: 0;
  height: 28px;
  margin-left: 6px;
  padding: 0 9px;
  gap: 8px;
  background: #f1f3f4;
  border-radius: 14px;
  font-family: "Noto Sans", sans-serif;
}

.not-secure {
  padding-right: 8px;
  border-right: 1px solid #a9acb0;
  line-height: 16px;
  white-space: nowrap;
}

.url {
  flex: 1;
  overflow: hidden;
  white-space: nowrap;
}

.url b {
  font-weight: 400;
  color: #202124;
}

.omnibox button {
  margin-left: 8px;
}

.extensions {
  display: flex;
  gap: 14px;
  margin-left: 13px;
  padding-right: 12px;
  border-right: 1px solid #d0d2d5;
}

.ext {
  position: relative;
  display: flex;
}

.ext-badge {
  position: absolute;
  left: 6px;
  top: 7px;
  padding: 0 2px;
  background: #4a80e8;
  border-radius: 2px;
  color: #fff;
  font-size: 9px;
  font-weight: 700;
  line-height: 11px;
}

.profile {
  width: 20px;
  height: 20px;
  margin: 0 12px 0 11px;
  border-radius: 50%;
  background: #5566bd;
  color: #fff;
  font-size: 11px;
}

.menu-btn {
  width: 20px;
}

/* Bookmarks */
.bookmarks {
  display: grid;
  grid-template-columns: 64px 62px 143px 145px 82px 145px 144px 1fr;
  align-items: center;
  height: 33px;
  padding: 0 0 4px 14px;
  border-bottom: 1px solid #9a9c9f;
  font-size: 11px;
  color: #4a4d51;
}

.bookmarks a {
  display: flex;
  align-items: center;
  gap: 8px;
  white-space: nowrap;
}

/* Page area */
.viewport {
  flex: 1;
  display: flex;
  min-height: 0;
}

.site {
  flex: 1;
  min-width: 0;
  display: flex;
  flex-direction: column;
}

.admin-bar {
  display: flex;
  align-items: center;
  flex-shrink: 0;
  gap: 14px;
  height: 30px;
  padding: 0 8px 0 6px;
  background: #23282d;
  color: #eee;
}

.admin-bar a {
  display: flex;
  align-items: center;
  gap: 7px;
}

.admin-bar svg {
  color: #a0a5aa;
}

.admin-bar .dim {
  color: #a0a5aa;
}

.bar-comments {
  padding-left: 2px;
}

.bar-new {
  padding-left: 4px;
}

.admin-bar .bar-user {
  margin-left: auto;
}

.admin-body {
  flex: 1;
  display: flex;
  min-height: 0;
  overflow: hidden;
  background: #f0f0f0;
}

/* Admin menu */
.admin-menu {
  flex: 0 0 150px;
  padding-top: 3px;
  background: #23282d;
  color: #eee;
}

.admin-menu > a {
  display: flex;
  align-items: center;
  gap: 7px;
  height: 32px;
  padding-left: 7px;
}

.admin-menu > a svg {
  color: #a0a5aa;
}

.admin-menu > .current {
  position: relative;
  background: #0073aa;
  color: #fff;
}

.admin-menu > .current svg {
  color: #fff;
}

.admin-menu > .current::after {
  content: "";
  position: absolute;
  right: 0;
  top: 8px;
  border: 8px solid transparent;
  border-right-color: #f0f0f0;
  border-left: none;
}

.submenu {
  padding: 8px 0;
  background: #32373c;
  color: #b4b9be;
}

.submenu a {
  display: block;
  padding-left: 11px;
  line-height: 26px;
}

.submenu .selected {
  color: #fff;
  font-weight: 600;
}

.admin-menu > .group-end {
  margin-bottom: 10px;
}

.count {
  width: 17px;
  height: 17px;
  border-radius: 50%;
  background: #ca4a1f;
  color: #fff;
  font-size: 10px;
  line-height: 17px;
  text-align: center;
}

/* Settings tabs */
.settings-tabs {
  flex: 0 0 151px;
  margin: -16px 0 0 21px;
  border-left: 1px solid #e2e2e2;
  font-family: Inter, sans-serif;
  font-size: 13px;
  color: #8f9190;
}

.settings-tabs a {
  display: flex;
  align-items: center;
  gap: 7px;
  height: 46px;
  padding-left: 11px;
  border-bottom: 1px solid #dedede;
}

.settings-tabs svg {
  height: 12px;
}

.w9 { width: 9px; }
.w10 { width: 10px; }
.w12 { width: 12px; }
.w14 { width: 14px; }

.settings-tabs .active {
  padding-left: 8px;
  border-left: 3px solid #36a57c;
  background: #68c6a4;
  color: #fff;
}

/* Field editor */
.content {
  flex: 1;
  min-width: 0;
  margin-right: 20px;
  padding: 12px 18px 0;
  background: #fff;
  border-left: 1px solid #e2e2e2;
  font-family: Inter, sans-serif;
  font-size: 13px;
  color: #5c5c5c;
}

.forms {
  line-height: 20px;
}

.forms strong {
  font-weight: 600;
}

.forms .active {
  color: #68c6a4;
  font-weight: 600;
}

.forms .bar {
  margin: 0 2px;
}

.card {
  margin-top: 32px;
  background: #fff;
  box-shadow: 0 8px 24px rgba(0, 0, 0, 0.12);
}

.card-actions {
  display: flex;
  justify-content: space-between;
  padding: 13px 18px 9px 13px;
}

.btn {
  gap: 4px;
  height: 38px;
  padding: 0 15px 3px;
  background: #68c6a4;
  border-bottom: 4px solid #57b190;
  border-radius: 4px;
  color: #fff;
  font-size: 13px;
  font-weight: 600;
}

table {
  width: 100%;
  table-layout: fixed;
  border-collapse: collapse;
  text-align: center;
}

th {
  height: 50px;
  background: #68c6a4;
  border-left: 1px solid #5cb896;
  color: #fff;
  font-size: 13px;
  font-weight: 500;
}

th:first-child {
  border-left: none;
}

.col-drag { width: 8%; }
.col-label { width: 23%; }
.col-name { width: 34.4%; }
.col-type { width: 14.2%; }

td {
  height: 48px;
  padding-bottom: 2px;
  border: 1px solid #e6e6e6;
}

tbody tr:nth-child(odd) {
  background: #f9f9f9;
}

tbody tr:last-child td {
  border-bottom-color: #c4c4c4;
}

code {
  padding: 3px 5px 2px;
  background: #e9e9e9;
  font-family: "DejaVu Sans Mono", monospace;
  font-size: 11px;
}

.bars {
  width: 14px;
  height: 11px;
  color: #444;
}

.row-actions {
  display: flex;
  align-items: center;
  justify-content: center;
  gap: 2px;
}

.row-actions a {
  display: flex;
  color: #68c6a4;
}

.edit {
  width: 18px;
  height: 16px;
}

h3 {
  margin-top: 44px;
  color: #3c3c3c;
  font-size: 15px;
  font-weight: 500;
  line-height: 20px;
}

.option-row {
  display: flex;
  align-items: flex-start;
  margin-top: 41px;
  line-height: 20px;
}

.option-row label {
  flex: 0 0 348px;
}

.option-row input {
  width: 172px;
  height: 30px;
  margin-top: 21px;
  border: 1px solid #999;
  border-radius: 4px;
}

/* Scrollbar */
.scrollbar {
  width: 16px;
  display: flex;
  flex-direction: column;
  background: #f1f1f1;
}

.scroll-track {
  flex: 1;
  display: flex;
  flex-direction: column;
  padding: 0 2px;
}

.scroll-track::before {
  content: "";
  flex: 168;
}

.scroll-track::after {
  content: "";
  flex: 101;
}

.scroll-thumb {
  flex: 284;
  background: #c1c1c1;
}

/* Taskbar */
.taskbar {
  display: flex;
  height: 38px;
  padding-right: 3px;
  background: #3f4042;
  color: #fff;
}

.start {
  width: 45px;
  background: #2a3138;
}

.search {
  display: flex;
  align-items: center;
  gap: 11px;
  width: 322px;
  padding-left: 11px;
  background: #f1f1f1;
  border-top: 1px solid #c8c8c8;
}

.search input {
  flex: 1;
  min-width: 0;
  border: none;
  background: none;
  font-family: inherit;
  font-size: 13px;
}

.search input::placeholder {
  color: #3c3c3c;
}

.apps {
  display: flex;
}

.apps button {
  width: 46px;
  border-bottom: 2px solid transparent;
  border-top: 2px solid transparent;
}

.apps .running {
  border-bottom-color: #76b9ed;
}

.apps .focused {
  background: #6b6c6d;
  border-top-color: #6b6c6d;
}

.tray {
  display: flex;
  align-items: center;
  gap: 8px;
  margin-left: auto;
}

.clock {
  display: flex;
  flex-direction: column;
  justify-content: center;
  width: 66px;
  margin-left: 1px;
  font-size: 11px;
  line-height: 17px;
  text-align: center;
}

.notice {
  width: 44px;
  padding-right: 4px;
  border-right: 1px solid #77797b;
}

/* Recorder controls */
.recorder {
  position: absolute;
  left: 9px;
  bottom: 47px;
  display: flex;
  align-items: center;
  gap: 3px;
}

.recorder button {
  width: 38px;
  height: 38px;
  border-radius: 50%;
  background: #fff;
  box-shadow: 0 1px 4px rgba(0, 0, 0, 0.3);
}

.recorder .small {
  width: 24px;
  height: 24px;
  margin-right: 6px;
}

.recorder .done {
  background: #00d97e;
}

/* Screen sharing notice */
.sharing {
  position: absolute;
  left: 50%;
  bottom: 45px;
  display: flex;
  align-items: center;
  width: 531px;
  height: 41px;
  margin-left: -265px;
  padding: 0 9px 1px;
  background: #fff;
  border: 1px solid #bbb;
  box-shadow: 0 2px 3px rgba(0, 0, 0, 0.3);
  color: #3c3c3c;
  font-size: 11px;
}

.grip {
  width: 5px;
  height: 12px;
  margin-right: 10px;
  border-left: 1px solid #aaa;
  border-right: 1px solid #aaa;
}

.sharing p {
  flex: 1;
  font-family: Roboto, sans-serif;
  white-space: nowrap;
}

.sharing button {
  width: 94px;
  height: 30px;
  background: #4688f1;
  border-radius: 3px;
  color: #fff;
  font-size: 11px;
  font-weight: 600;
}

.sharing a {
  margin-left: 10px;
  color: #3f7fdc;
}

.cursor {
  position: absolute;
  left: 634px;
  top: 594px;
  width: 12px;
  height: 19px;
}
```
